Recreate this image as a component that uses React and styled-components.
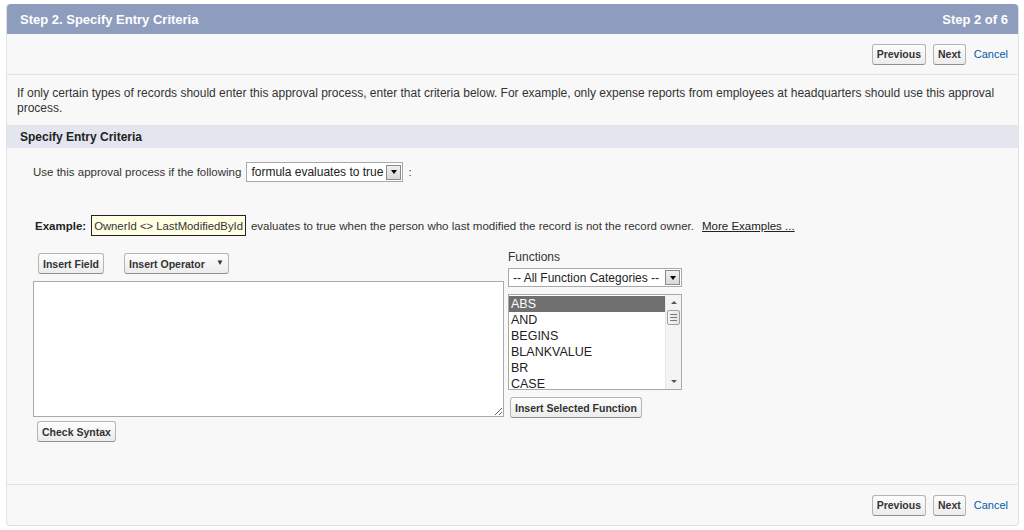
import React from "react";
import styled, { createGlobalStyle } from "styled-components";

const GlobalStyle = createGlobalStyle`
  body {
    margin: 0;
    background: #ffffff;
    font-family: "Liberation Sans", Arial, sans-serif;
    color: #333;
  }
`;

const Panel = styled.div`
  box-sizing: border-box;
  height: 522px;
  margin: 4px 5px 0 6px;
  display: flex;
  flex-direction: column;
  background: #f8f8f8;
  border: 1px solid #e0e3e5;
  border-top: none;
  border-radius: 4px;
`;
const Header = styled.div`
  height: 30px;
  display: flex;
  align-items: center;
  justify-content: space-between;
  padding: 0 10px 0 13px;
  background: #8e9dbe;
  border-radius: 4px 4px 0 0;
  color: #fff;
  font-size: 13px;
  font-weight: bold;
`;
const ButtonBar = styled.div`
  height: 40px;
  flex-shrink: 0;
  display: flex;
  align-items: center;
  justify-content: flex-end;
  gap: 7px;
  padding-right: 10px;
  border-${(p) => (p.$bottom ? "top" : "bottom")}: 1px solid #e3e3e3;
`;
const Button = styled.button`
  height: 21px;
  padding: 0 4px;
  display: inline-flex;
  align-items: center;
  gap: 11px;
  white-space: nowrap;
  font-family: "Liberation Sans", Arial, sans-serif;
  font-size: 10.5px;
  font-weight: bold;
  color: #333;
  background: linear-gradient(#fdfdfd, #ececec);
  border: 1px solid #b5b5b5;
  border-bottom-color: #8f8f8f;
  border-radius: 3px;
  margin-left: ${(p) => p.$left || 0}px;
`;
const Caret = styled.span`
  font-size: 8px;
  margin-top: -2px;
`;
const CancelLink = styled.a`
  font-size: 11px;
  color: #015ba7;
  margin-left: 1px;
  text-decoration: none;
`;
const Description = styled.div`
  padding: 11px 10px 9px 10px;
  font-size: 12px;
  line-height: 15px;
  border-bottom: 1px solid #e3e3e3;
`;
const SectionHeader = styled.div`
  height: 22px;
  display: flex;
  align-items: center;
  padding-left: 13px;
  background: #e3e6ee;
  font-size: 12px;
  font-weight: bold;
  color: #222;
`;
const Content = styled.div`
  flex: 1;
  padding: 14px 0 0 26px;
  display: flex;
  flex-direction: column;
  font-size: 11.5px;
`;
const Row = styled.div`
  display: flex;
  align-items: center;
  gap: 5px;
  margin-top: ${(p) => p.$top || 0}px;
  margin-left: ${(p) => p.$left || 0}px;
`;
const SelectBox = styled.div`
  box-sizing: border-box;
  width: ${(p) => p.$width}px;
  height: ${(p) => p.$height || 20}px;
  display: flex;
  align-items: center;
  justify-content: space-between;
  padding: 0 1px 0 4px;
  background: #fff;
  border: 1px solid #a9a9a9;
  font-size: 12px;
  color: #222;
`;
const SelectArrow = styled.span`
  box-sizing: border-box;
  width: 15px;
  height: 15px;
  display: flex;
  align-items: center;
  justify-content: center;
  background: linear-gradient(#f0f0f0, #d8d8d8);
  border: 1px solid #8a8a8a;
  &::after {
    content: "";
    border-left: 3px solid transparent;
    border-right: 3px solid transparent;
    border-top: 4px solid #000;
  }
`;
const Bold = styled.span`
  font-weight: bold;
  color: #222;
`;
const CodeBox = styled.span`
  box-sizing: border-box;
  height: 21px;
  display: inline-flex;
  align-items: center;
  padding: 0 2px 0 2px;
  background: #ffffe4;
  border: 1px solid #222;
  color: #333;
  font-size: 11.3px;
`;
const Underlined = styled.a`
  margin-left: 3px;
  color: #222;
  text-decoration: underline;
`;
const Editor = styled.div`
  display: flex;
  gap: 4px;
  margin-top: 14px;
`;
const Column = styled.div`
  display: flex;
  flex-direction: column;
  align-items: flex-start;
`;
const EditorButtons = styled.div`
  display: flex;
  gap: 20px;
  margin: 3px 0 0 5px;
`;
const FormulaArea = styled.textarea`
  box-sizing: border-box;
  width: 471px;
  height: 136px;
  margin: 7px 0 4px 0;
  background: #fff;
  border: 1px solid #aaa;
  resize: both;
  outline: none;
`;
const Label = styled.div`
  height: 14px;
  line-height: 14px;
  font-size: 12px;
  color: #333;
  margin-bottom: 4px;
`;
const ListBox = styled.div`
  box-sizing: border-box;
  width: 174px;
  height: 96px;
  margin: 7px 0 7px 0;
  display: flex;
  background: #fff;
  border: 1px solid #a9a9a9;
  overflow: hidden;
`;
const Options = styled.div`
  flex: 1;
  display: flex;
  flex-direction: column;
  padding-top: 1px;
`;
const Option = styled.div`
  height: 16px;
  line-height: 16px;
  flex-shrink: 0;
  padding-left: 2px;
  font-size: 12.5px;
  color: ${(p) => (p.$selected ? "#fff" : "#222")};
  background: ${(p) => (p.$selected ? "#6f6f6f" : "transparent")};
`;
const Scrollbar = styled.div`
  width: 15px;
  display: flex;
  flex-direction: column;
  align-items: center;
  background: #f3f3f3;
  border-left: 1px solid #e6e6e6;
`;
const ScrollArrow = styled.div`
  height: 15px;
  width: 15px;
  display: flex;
  align-items: center;
  justify-content: center;
  &::after {
    content: "";
    border-left: 3px solid transparent;
    border-right: 3px solid transparent;
    ${(p) => (p.$down ? "border-top" : "border-bottom")}: 3px solid #555;
  }
`;
const Thumb = styled.div`
  box-sizing: border-box;
  width: 13px;
  height: 15px;
  display: flex;
  flex-direction: column;
  align-items: center;
  justify-content: center;
  gap: 2px;
  background: linear-gradient(90deg, #f7f7f7, #e4e4e4);
  border: 1px solid #a0a0a0;
  border-radius: 2px;
  span {
    width: 7px;
    height: 1px;
    background: #777;
  }
`;
const Track = styled.div`
  flex: 1;
`;

const functions = ["ABS", "AND", "BEGINS", "BLANKVALUE", "BR", "CASE"];

const NavButtons = ({ bottom }) => (
  <ButtonBar $bottom={bottom}>
    <Button>Previous</Button>
    <Button>Next</Button>
    <CancelLink href="#">Cancel</CancelLink>
  </ButtonBar>
);

export default function App() {
  return (
    <>
      <GlobalStyle />
      <Panel>
        <Header>
          <span>Step 2. Specify Entry Criteria</span>
          <span>Step 2 of 6</span>
        </Header>
        <NavButtons />
        <Description>
          If only certain types of records should enter this approval process, enter that criteria below. For
          example, only expense reports from employees at headquarters should use this approval process.
        </Description>
        <SectionHeader>Specify Entry Criteria</SectionHeader>
        <Content>
          <Row>
            <span>Use this approval process if the following</span>
            <SelectBox $width={157}>
              formula evaluates to true
              <SelectArrow />
            </SelectBox>
            <span>:</span>
          </Row>
          <Row $top={33} $left={2}>
            <Bold>Example:</Bold>
            <CodeBox>OwnerId &lt;&gt; LastModifiedById</CodeBox>
            <span>evaluates to true when the person who last modified the record is not the record owner.</span>
            <Underlined href="#">More Examples ...</Underlined>
          </Row>
          <Editor>
            <Column>
              <EditorButtons>
                <Button>Insert Field</Button>
                <Button>
                  Insert Operator <Caret>▼</Caret>
                </Button>
              </EditorButtons>
              <FormulaArea />
              <Button $left={4}>Check Syntax</Button>
            </Column>
            <Column>
              <Label>Functions</Label>
              <SelectBox $width={174} $height={19}>
                -- All Function Categories --
                <SelectArrow />
              </SelectBox>
              <ListBox>
                <Options>
                  {functions.map((f, i) => (
                    <Option key={f} $selected={i === 0}>
                      {f}
                    </Option>
                  ))}
                </Options>
                <Scrollbar>
                  <ScrollArrow />
                  <Thumb>
                    <span />
                    <span />
                    <span />
                  </Thumb>
                  <Track />
                  <ScrollArrow $down />
                </Scrollbar>
              </ListBox>
              <Button $left={2}>Insert Selected Function</Button>
            </Column>
          </Editor>
        </Content>
        <NavButtons bottom />
      </Panel>
    </>
  );
}
